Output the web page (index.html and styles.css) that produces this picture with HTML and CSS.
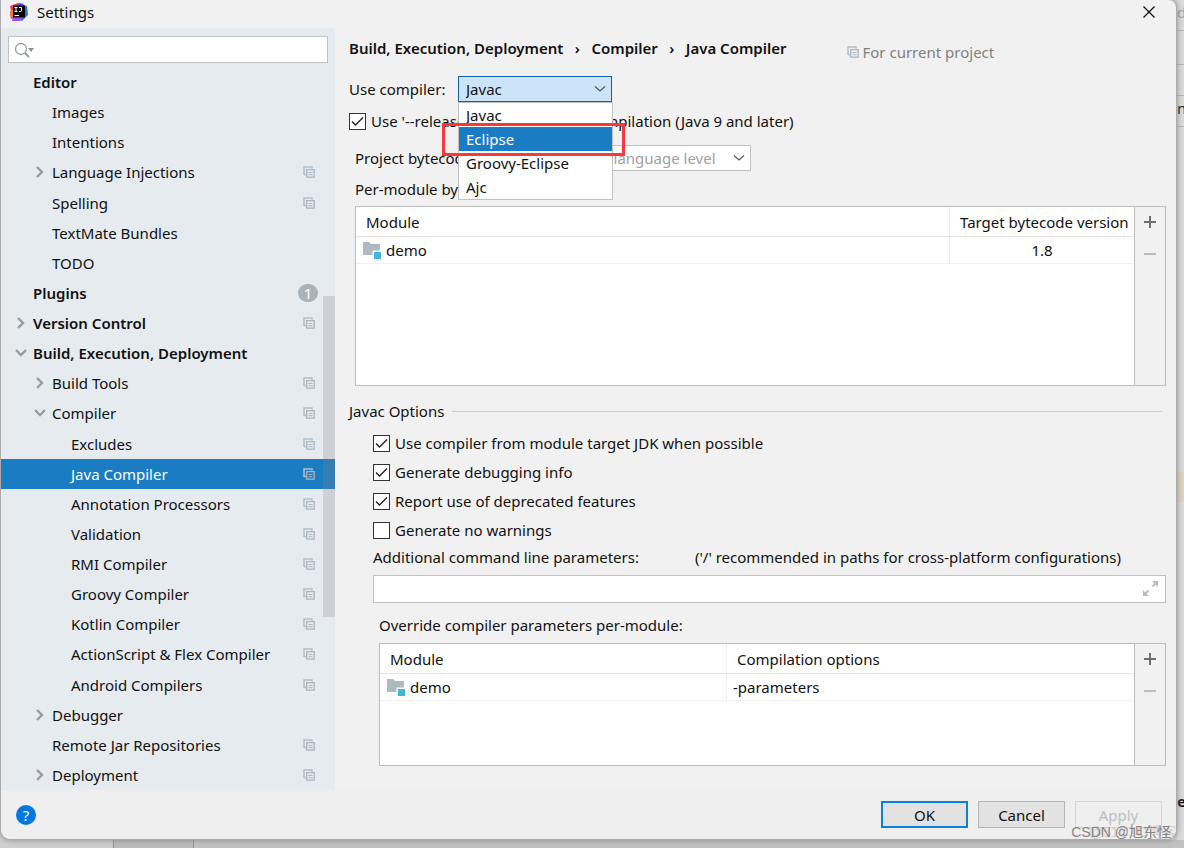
FILE: index.html
```html
<!DOCTYPE html>
<html lang="en">
<head>
<meta charset="utf-8">
<title>Settings</title>
<link rel="stylesheet" href="styles.css">
</head>
<body>
<svg class="defs" aria-hidden="true">
  <symbol id="copy" viewBox="0 0 12 12"><path d="M1 9V1h8v1.500M1 8.500h2" fill="none" stroke="#b3bec6" stroke-width="1.500"/><path d="M3.700 3.700h7.500v7.500H3.700z" fill="none" stroke="#aab5be" stroke-width="1.300"/><path d="M5.500 6.500h4M5.500 8.700h4" stroke="#aab5be"/></symbol>
  <symbol id="right" viewBox="0 0 10 14"><path d="M2 2l5 5-5 5" fill="none" stroke="#999c9f" stroke-width="2.400"/></symbol>
  <symbol id="down" viewBox="0 0 12 10"><path d="M1 2l5 5 5-5" fill="none" stroke="#999c9f" stroke-width="2.400"/></symbol>
  <symbol id="caret" viewBox="0 0 12 8"><path d="M1 1.500l5 4.500 5-4.500" fill="none" stroke="currentColor" stroke-width="1.200"/></symbol>
  <symbol id="folder" viewBox="0 0 20 18"><path d="M1 1h6l2 2h9v6.500h-7.500V14H1z" fill="#aeb9c0"/><path d="M12 11h7v7h-7z" fill="#40b6e0"/></symbol>
  <symbol id="plus" viewBox="0 0 14 14"><path d="M7 1v12M1 7h12" stroke="#6e6e6e" stroke-width="2"/></symbol>
  <symbol id="minus" viewBox="0 0 14 14"><path d="M1 7h12" stroke="#bcbcbc" stroke-width="2"/></symbol>
</svg>
<div class="desktop">
  <main class="window">
    <header class="titlebar">
      <svg class="logo" viewBox="0 0 20 20" aria-hidden="true"><path d="M1 4l8-3 3 6-5 8-5 2-1-5 1-3z" fill="#fc3158"/><path d="M1 9l6-2v6l-5 3z" fill="#f8772e"/><path d="M9 1l9 3 1 9-6 6-7-3z" fill="#3b6fe8"/><path d="M3 19l1-5 9 2-2 3z" fill="#a34cf0"/><path d="M10 1l5 1-4 4z" fill="#5a3fd8"/><path d="M4 3.500h12v12H4z" fill="#08070c"/><path d="M5.500 5.500h3M7 5.500v4M5.500 9.500h3M10 5.500h2.500v3q0 1-1 1H10M5.500 13.500h4.500" fill="none" stroke="#fff"/></svg>
      <span class="title">Settings</span>
      <button class="close" aria-label="Close"><svg width="12" height="12" viewBox="0 0 12 12"><path d="M.5.5l11 11M11.500.5l-11 11" stroke="#111" stroke-width="1.300"/></svg></button>
    </header>
    <div class="body">
      <nav class="sidebar" aria-label="Settings categories">
        <div class="search">
          <svg width="21" height="16" viewBox="0 0 21 16" aria-hidden="true"><circle cx="7" cy="7" r="5.500" fill="none" stroke="#919ca4" stroke-width="1.300"/><path d="M11 11l4 4" stroke="#919ca4" stroke-width="2"/><path d="M14 6h6l-3 4z" fill="#87939b"/></svg>
          <input type="text" aria-label="Search settings">
        </div>
        <ul class="tree">
          <li><a class="row top" href="#"><span class="twist"></span><span class="name">Editor</span></a></li>
          <li><a class="row mid" href="#"><span class="twist"></span><span class="name">Images</span></a></li>
          <li><a class="row mid" href="#"><span class="twist"></span><span class="name">Intentions</span></a></li>
          <li><a class="row mid" href="#"><span class="twist"><svg class="r"><use href="#right"/></svg></span><span class="name">Language Injections</span><svg class="copy"><use href="#copy"/></svg></a></li>
          <li><a class="row mid" href="#"><span class="twist"></span><span class="name">Spelling</span><svg class="copy"><use href="#copy"/></svg></a></li>
          <li><a class="row mid" href="#"><span class="twist"></span><span class="name">TextMate Bundles</span></a></li>
          <li><a class="row mid" href="#"><span class="twist"></span><span class="name">TODO</span></a></li>
          <li><a class="row top" href="#"><span class="twist"></span><span class="name">Plugins</span><span class="count">1</span></a></li>
          <li><a class="row top" href="#"><span class="twist"><svg class="r"><use href="#right"/></svg></span><span class="name">Version Control</span><svg class="copy"><use href="#copy"/></svg></a></li>
          <li><a class="row top" href="#"><span class="twist"><svg class="d"><use href="#down"/></svg></span><span class="name">Build, Execution, Deployment</span></a></li>
          <li><a class="row mid" href="#"><span class="twist"><svg class="r"><use href="#right"/></svg></span><span class="name">Build Tools</span><svg class="copy"><use href="#copy"/></svg></a></li>
          <li><a class="row mid" href="#"><span class="twist"><svg class="d"><use href="#down"/></svg></span><span class="name">Compiler</span><svg class="copy"><use href="#copy"/></svg></a></li>
          <li><a class="row leaf" href="#"><span class="name">Excludes</span><svg class="copy"><use href="#copy"/></svg></a></li>
          <li><a class="row leaf selected" href="#" aria-current="page"><span class="name">Java Compiler</span><svg class="copy"><use href="#copy"/></svg></a></li>
          <li><a class="row leaf" href="#"><span class="name">Annotation Processors</span><svg class="copy"><use href="#copy"/></svg></a></li>
          <li><a class="row leaf" href="#"><span class="name">Validation</span><svg class="copy"><use href="#copy"/></svg></a></li>
          <li><a class="row leaf" href="#"><span class="name">RMI Compiler</span><svg class="copy"><use href="#copy"/></svg></a></li>
          <li><a class="row leaf" href="#"><span class="name">Groovy Compiler</span><svg class="copy"><use href="#copy"/></svg></a></li>
          <li><a class="row leaf" href="#"><span class="name">Kotlin Compiler</span><svg class="copy"><use href="#copy"/></svg></a></li>
          <li><a class="row leaf" href="#"><span class="name">ActionScript &amp; Flex Compiler</span><svg class="copy"><use href="#copy"/></svg></a></li>
          <li><a class="row leaf" href="#"><span class="name">Android Compilers</span><svg class="copy"><use href="#copy"/></svg></a></li>
          <li><a class="row mid" href="#"><span class="twist"><svg class="r"><use href="#right"/></svg></span><span class="name">Debugger</span></a></li>
          <li><a class="row mid" href="#"><span class="twist"></span><span class="name">Remote Jar Repositories</span><svg class="copy"><use href="#copy"/></svg></a></li>
          <li><a class="row mid" href="#"><span class="twist"><svg class="r"><use href="#right"/></svg></span><span class="name">Deployment</span><svg class="copy"><use href="#copy"/></svg></a></li>
        </ul>
        <div class="scrollbar"></div>
      </nav>
      <section class="content">
        <div class="crumbs">
          <span>Build, Execution, Deployment</span><span class="sep">›</span><span>Compiler</span><span class="sep">›</span><span>Java Compiler</span>
          <span class="scope"><svg class="copy"><use href="#copy"/></svg>For current project</span>
        </div>
        <div class="compiler">
          <label for="compiler">Use compiler:</label>
          <div class="combo open">
            <select id="compiler"><option>Javac</option><option>Eclipse</option><option>Groovy-Eclipse</option><option>Ajc</option></select>
            <svg class="caret"><use href="#caret"/></svg>
            <ul class="popup" role="listbox" aria-label="Compilers">
              <li role="option">Javac</li>
              <li role="option" class="active" aria-selected="true">Eclipse</li>
              <li role="option">Groovy-Eclipse</li>
              <li role="option">Ajc</li>
            </ul>
            <div class="highlight"></div>
          </div>
        </div>
        <label class="check release"><input type="checkbox" checked>Use '--release' option for cross-compilation (Java 9 and later)</label>
        <div class="bytecode">
          <label for="level">Project bytecode version:</label>
          <div class="combo level">
            <select id="level" disabled><option>Same as language level</option></select>
            <svg class="caret"><use href="#caret"/></svg>
          </div>
        </div>
        <div class="caption per-module">Per-module bytecode version:</div>
        <div class="panel modules">
          <div class="sheet">
            <table>
              <colgroup><col><col class="target"></colgroup>
              <thead><tr><th>Module</th><th>Target bytecode version</th></tr></thead>
              <tbody><tr><td><span class="module"><svg class="folder"><use href="#folder"/></svg>demo</span></td><td class="center">1.8</td></tr></tbody>
            </table>
          </div>
          <div class="tools"><button aria-label="Add"><svg><use href="#plus"/></svg></button><button aria-label="Remove" disabled><svg><use href="#minus"/></svg></button></div>
        </div>
        <h2 class="group">Javac Options</h2>
        <div class="options">
          <label class="check"><input type="checkbox" checked>Use compiler from module target JDK when possible</label>
          <label class="check"><input type="checkbox" checked>Generate debugging info</label>
          <label class="check"><input type="checkbox" checked>Report use of deprecated features</label>
          <label class="check"><input type="checkbox">Generate no warnings</label>
        </div>
        <div class="params">
          <label for="params">Additional command line parameters:</label>
          <span>('/' recommended in paths for cross-platform configurations)</span>
        </div>
        <div class="field">
          <input type="text" id="params">
          <button aria-label="Expand"><svg width="16" height="16" viewBox="0 0 16 16"><path d="M9 0h6v6zM0 9v6h6z" fill="#b8bec2"/><path d="M9.500 5.500l4-4M1.500 13.500l4-4" stroke="#b8bec2" stroke-width="2"/></svg></button>
        </div>
        <div class="caption override">Override compiler parameters per-module:</div>
        <div class="panel overrides">
          <div class="sheet">
            <table>
              <colgroup><col class="name-col"><col></colgroup>
              <thead><tr><th>Module</th><th>Compilation options</th></tr></thead>
              <tbody><tr><td><span class="module"><svg class="folder"><use href="#folder"/></svg>demo</span></td><td>-parameters</td></tr></tbody>
            </table>
          </div>
          <div class="tools"><button aria-label="Add"><svg><use href="#plus"/></svg></button><button aria-label="Remove" disabled><svg><use href="#minus"/></svg></button></div>
        </div>
      </section>
    </div>
    <footer class="footer">
      <button class="help" aria-label="Help">?</button>
      <button class="btn primary">OK</button>
      <button class="btn">Cancel</button>
      <button class="btn" disabled>Apply</button>
    </footer>
  </main>
  <aside class="behind">
    <div class="bit pale">dl</div>
    <div class="bit tall"></div>
    <div class="bit"></div>
    <div class="bit">n</div>
    <div class="gap"></div>
    <div class="mark"></div>
    <div class="gap low"></div>
    <div class="word">e</div>
  </aside>
  <div class="below"><span></span><span></span><span></span></div>
  <div class="watermark second">@51CTO博客</div>
  <div class="watermark first">CSDN @旭东怪</div>
</div>
</body>
</html>
```
FILE: styles.css
```css
* { box-sizing: border-box; }
body {
  margin: 0;
  font: 15px/22px "Noto Sans", "Noto Sans CJK SC", sans-serif;
  color: #111;
}
ul { list-style: none; margin: 0; padding: 0; }
button, input, select { font: inherit; color: inherit; }
button { padding: 0; border: 0; background: none; }
.defs { display: none; }

.desktop {
  position: relative;
  display: grid;
  grid-template-columns: minmax(0, 1fr) 7px;
  grid-template-rows: minmax(0, 1fr) 8px;
  min-height: 100vh;
  background: #d2d2d2;
  overflow: hidden;
}
.window {
  display: flex;
  flex-direction: column;
  border: 1px solid #ababab;
  border-top: 0;
  border-radius: 0 8px 10px 10px;
  background: #f1f1f1;
  box-shadow: 0 0 6px #888;
  z-index: 1;
}
.titlebar { display: flex; align-items: center; height: 28px; padding: 0 21px 4px 8px; }
.logo { width: 20px; height: 20px; }
.title { flex: 1; margin-left: 8px; }
.close { display: flex; }

.body { flex: 1; display: flex; }
.sidebar {
  position: relative;
  display: flex;
  flex-direction: column;
  flex: 0 0 334px;
  padding-top: 8px;
  background: #e6ebf0;
}
.search {
  display: flex;
  align-items: center;
  height: 27px;
  margin: 0 7px 4px;
  padding-left: 5px;
  border: 1px solid #bfc3c6;
  background: #fff;
}
.search input { flex: 1; min-width: 0; border: 0; outline: 0; background: none; }
.tree { flex: 1; display: flex; flex-direction: column; }
.tree li { flex: 1; display: flex; }
.row {
  flex: 1;
  display: flex;
  align-items: center;
  padding-right: 20px;
  color: #111;
  text-decoration: none;
}
.top { padding-left: 13px; font-weight: 600; }
.mid { padding-left: 32px; }
.leaf { padding-left: 70px; }
.twist { width: 19px; display: flex; }
.twist .r { width: 10px; height: 14px; margin-left: 2px; }
.twist .d { width: 12px; height: 10px; margin-left: 1px; }
.name { flex: 1; }
.copy { width: 12px; height: 12px; }
.selected { background: #1a7dc4; color: #fff; }
.count {
  width: 20px;
  height: 18px;
  margin-right: -3px;
  border-radius: 9px;
  background: #a8b3ba;
  color: #fff;
  font-weight: normal;
  line-height: 18px;
  text-align: center;
}
.scrollbar {
  position: absolute;
  right: 0;
  top: 268px;
  width: 12px;
  height: 321px;
  background: rgba(130, 130, 130, .25);
}

.content {
  flex: 1;
  min-width: 0;
  display: flex;
  flex-direction: column;
  padding: 0 10px 24px 14px;
}
.crumbs { display: flex; align-items: center; height: 40px; font-weight: 600; }
.sep { width: 28px; text-align: center; }
.scope {
  display: flex;
  align-items: center;
  gap: 4px;
  margin: 8px 0 0 60px;
  font-weight: normal;
  color: #808080;
}
.compiler { display: flex; align-items: center; margin-top: 8px; }
.compiler label { width: 109px; }
.combo { position: relative; display: flex; width: 154px; height: 26px; }
.combo select {
  width: 100%;
  appearance: none;
  border: 1px solid #0f62a8;
  border-radius: 0;
  padding: 0 24px 0 7px;
  background: #cce4f7;
}
.caret { position: absolute; right: 6px; top: 9px; width: 12px; height: 8px; color: #555; pointer-events: none; }
.popup {
  position: absolute;
  z-index: 2;
  top: 26px;
  left: 0;
  width: 155px;
  border: 1px solid #c0c0c0;
  background: #fff;
}
.popup li { height: 24px; padding-left: 7px; line-height: 24px; }
.popup .active { background: #1a7dc4; color: #fff; }
.highlight {
  position: absolute;
  z-index: 3;
  top: 47px;
  left: -16px;
  width: 183px;
  height: 33px;
  border: 3px solid #f93939;
}
.check { display: flex; align-items: center; gap: 5px; }
.check input {
  appearance: none;
  width: 17px;
  height: 17px;
  margin: 0;
  border: 1px solid #333;
  outline: 0;
  background: #fff center / 13px 13px no-repeat;
}
.check input:checked {
  background-image: url("data:image/svg+xml,%3Csvg xmlns='http://www.w3.org/2000/svg' viewBox='0 0 13 13'%3E%3Cpath d='M1 6.500l3.500 3.500L12 2.500' fill='none' stroke='%23222' stroke-width='1.400'/%3E%3C/svg%3E");
}
.release { margin-top: 8px; }
.bytecode { display: flex; align-items: center; margin: 13px 0 0 6px; }
.bytecode label { width: 188px; }
.combo.level { width: 208px; }
.level select { border-color: #c0c0c0; background: #fff; color: #a0a0a0; opacity: 1; }
.caption { line-height: 22px; }
.per-module { margin: 7px 0 6px 6px; }
.panel { display: flex; border: 1px solid #bdbdbd; }
.modules { min-height: 180px; margin-left: 6px; }
.sheet { flex: 1; min-width: 0; background: #fff; }
.sheet table { width: 100%; table-layout: fixed; border-collapse: separate; border-spacing: 0; }
.target { width: 185px; }
.name-col { width: 346px; }
.sheet th {
  height: 30px;
  padding: 0 0 0 10px;
  border-bottom: 1px solid #e3e3e3;
  font-weight: normal;
  text-align: left;
  white-space: nowrap;
}
.sheet th + th, .sheet td + td { border-left: 1px solid #ececec; }
.sheet td { height: 27px; padding: 0 6px; border-bottom: 1px solid #f2f2f2; }
.sheet .center { text-align: center; }
.module { display: flex; align-items: center; gap: 4px; }
.folder { width: 20px; height: 18px; }
.tools {
  width: 31px;
  display: flex;
  flex-direction: column;
  align-items: center;
  gap: 18px;
  padding-top: 8px;
  border-left: 1px solid #bdbdbd;
}
.tools button { display: flex; }
.tools svg { width: 14px; height: 14px; }
.group {
  display: flex;
  align-items: center;
  gap: 8px;
  margin: 14px 4px 10px 0;
  font: inherit;
}
.group::after { content: ""; flex: 1; border-top: 1px solid #cdcdcd; }
.options { display: flex; flex-direction: column; gap: 7px; margin-left: 24px; }
.params { display: flex; gap: 56px; margin: 5px 0 7px 24px; }
.field { display: flex; height: 28px; margin-left: 24px; padding-right: 6px; border: 1px solid #c0c0c0; background: #fff; }
.field input { flex: 1; min-width: 0; border: 0; outline: 0; background: none; }
.field button { display: flex; align-items: center; }
.override { margin: 11px 0 7px 30px; }
.overrides { flex: 1; margin-left: 30px; }

.footer {
  display: flex;
  align-items: center;
  gap: 10px;
  height: 49px;
  padding: 0 14px 0 15px;
  border-radius: 0 0 10px 10px;
  background: #efefef;
}
.help {
  width: 20px;
  height: 20px;
  margin-right: auto;
  border-radius: 50%;
  background: #0078e0;
  color: #fff;
  line-height: 20px;
}
.btn { width: 87px; height: 27px; border: 1px solid #b5b5b5; background: #e2e2e2; line-height: 24px; }
.primary { border: 2px solid #0a80dc; }
.btn:disabled { border-color: #d6d6d6; background: #efefef; color: #bdbdbd; }

.behind { display: flex; flex-direction: column; overflow: hidden; background: #dcdcdc; }
.bit { flex: 0 0 31px; border-bottom: 1px solid #b5b5b5; line-height: 24px; }
.bit.tall { flex-basis: 34px; }
.pale { color: #b0a098; }
.gap { flex: 345 0 0; }
.mark { flex: 0 0 30px; background: #dcd6bd; }
.gap.low { flex-grow: 288; }
.word { flex: 0 0 50px; font-weight: bold; }
.below { grid-column: 1 / -1; display: flex; background: #c0c0c0; }
.below span { border-right: 1px solid #909090; width: 114px; background: #cfcfcf; }
.below span + span { width: 80px; background: #bcbcbc; }
.below span:last-child { flex: 1; border: 0; background: #c2c2c2; }
.watermark {
  position: absolute;
  z-index: 4;
  bottom: 6px;
  font: 14px/20px "Liberation Sans", "Noto Sans CJK SC", sans-serif;
  white-space: nowrap;
}
.first { right: 13px; color: #858585; }
.second { right: 8px; color: #cfcfcf; }
```
